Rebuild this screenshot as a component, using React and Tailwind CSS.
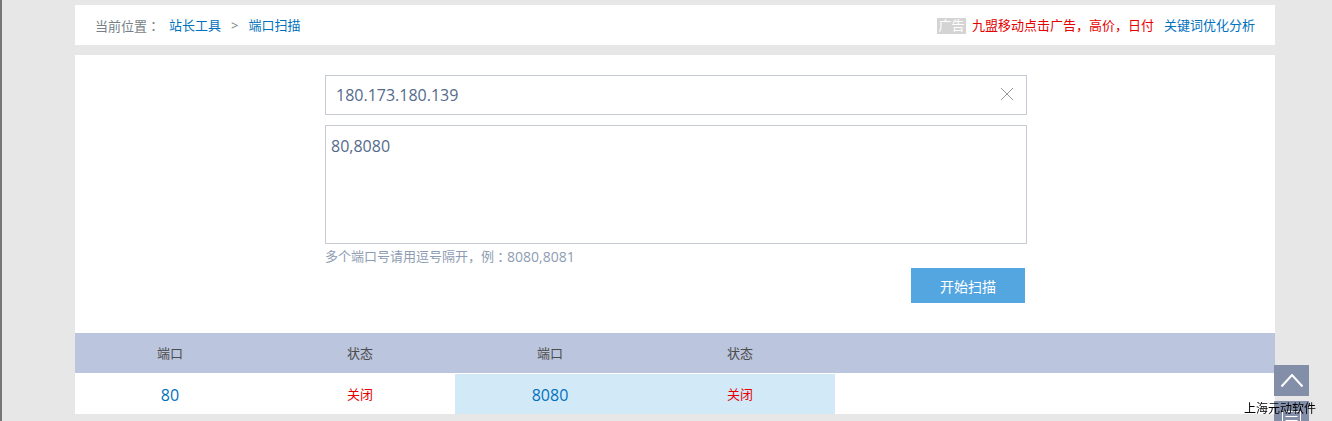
import { useState } from 'react';

const results = [
  { port: '80', status: '关闭' },
  { port: '8080', status: '关闭' },
];

function Breadcrumb() {
  return (
    <div className="flex h-10 items-center justify-between bg-white px-5 pt-[2px] text-[13px]">
      <nav className="flex items-center text-[#757f87]">
        <span className="font-['Noto_Sans_CJK_TC',sans-serif]">当前位置：</span>
        <a href="#tools" className="ml-[9px] text-[#0071bc]">站长工具</a>
        <span className="mx-[10px]">&gt;</span>
        <a href="#port" className="text-[#0071bc]">端口扫描</a>
      </nav>
      <div className="flex items-center">
        <span className="mr-[6px] flex h-4 w-[29px] items-center justify-center bg-[#d4d4d4] text-[13px] text-white">广告</span>
        <a href="#ad" className="mr-[10px] text-[#e60000]">九盟移动点击广告，高价，日付</a>
        <a href="#keywords" className="text-[#0071bc]">关键词优化分析</a>
      </div>
    </div>
  );
}

function ScanForm() {
  const [host, setHost] = useState('180.173.180.139');
  const [ports, setPorts] = useState('80,8080');

  return (
    <div className="flex justify-center pt-5 pb-[30px] pl-[2px]">
      <form className="w-[702px]" onSubmit={(e) => e.preventDefault()}>
        <div className="mb-[10px] flex h-10 items-center border border-[#c5cad3] pr-[11px] pb-[2px]">
          <input
            type="text"
            aria-label="域名或IP"
            value={host}
            onChange={(e) => setHost(e.target.value)}
            className="h-full min-w-0 flex-1 px-[10px] pt-[2px] text-base text-[#546a8c] outline-none"
          />
          <button type="button" aria-label="清空" onClick={() => setHost('')} className="flex h-4 w-4 items-center justify-center">
            <svg width="14" height="14" viewBox="0 0 14 14" fill="none" stroke="#999" strokeWidth="1">
              <path d="M1 1l12 12M13 1L1 13" />
            </svg>
          </button>
        </div>
        <textarea
          id="ports"
          value={ports}
          onChange={(e) => setPorts(e.target.value)}
          className="block h-[119px] w-full resize-none border border-[#c5cad3] px-[5px] py-2 text-base text-[#546a8c] outline-none"
        />
        <label htmlFor="ports" className="flex h-6 items-center pt-[2px] text-[13px] text-[#8e9cb2]">
          多个端口号请用逗号隔开，例<span className="font-['Noto_Sans_CJK_TC',sans-serif]">：</span>
          <span className="text-sm">8080,8081</span>
        </label>
        <div className="flex justify-end pr-[2px]">
          <button type="submit" className="h-[35px] w-[114px] bg-[#54a6e1] pt-[2px] text-sm text-white">
            开始扫描
          </button>
        </div>
      </form>
    </div>
  );
}

function ResultTable() {
  return (
    <table className="w-full table-fixed border-collapse text-center text-[13px]">
      <thead>
        <tr className="h-10 bg-[#bbc5dd] text-[#4d4d4d]">
          {results.map((item) => [
            <th key={`${item.port}-port`} className="w-[190px] p-0 pt-[2px] font-normal">端口</th>,
            <th key={`${item.port}-status`} className="w-[190px] p-0 pt-[2px] font-normal">状态</th>,
          ])}
          <td />
        </tr>
      </thead>
      <tbody>
        <tr className="h-[41px]">
          {results.map((item, i) => {
            const bg = i % 2 ? 'border-t border-white bg-[#d2e9f8]' : 'border-t border-white';
            return [
              <td key={`${item.port}-port`} className={`${bg} p-0 pt-[2px]`}>
                <a href={`#${item.port}`} className="text-base text-[#0071bc]">{item.port}</a>
              </td>,
              <td key={`${item.port}-status`} className={`${bg} p-0 pt-[2px] text-[#e60000]`}>{item.status}</td>,
            ];
          })}
          <td />
        </tr>
      </tbody>
    </table>
  );
}

function SideTools() {
  return (
    <div className="fixed top-[365px] right-[23px] flex flex-col gap-[5px]">
      <button type="button" aria-label="返回顶部" className="flex h-[31px] w-[35px] items-center justify-center bg-[#838fa9]">
        <svg width="24" height="14" viewBox="0 0 24 14" fill="none" stroke="#fff" strokeWidth="2">
          <path d="M1.500 12.500L12 1l10.500 11.500" />
        </svg>
      </button>
      <button type="button" aria-label="反馈" className="flex h-[31px] w-[35px] items-center justify-center bg-[#838fa9]">
        <svg width="21" height="21" viewBox="0 0 21 21" fill="none" stroke="#fff" strokeWidth="1">
          <path d="M1.500 5.500h18v12h-10l-3 3v-3h-5zM4.500 10.500h12M4.500 14.500h12" />
        </svg>
      </button>
    </div>
  );
}

export default function App() {
  return (
    <div className="min-h-screen border-l-2 border-[#777777] bg-[#e7e7e7] pt-[5px] pr-[57px] pl-[73px] font-['Open_Sans','Noto_Sans_CJK_SC',sans-serif]">
      <Breadcrumb />
      <main className="mt-[10px] bg-white">
        <ScanForm />
        <ResultTable />
      </main>
      <SideTools />
      <div className="fixed right-4 bottom-1 text-xs text-black">上海元动软件</div>
    </div>
  );
}
